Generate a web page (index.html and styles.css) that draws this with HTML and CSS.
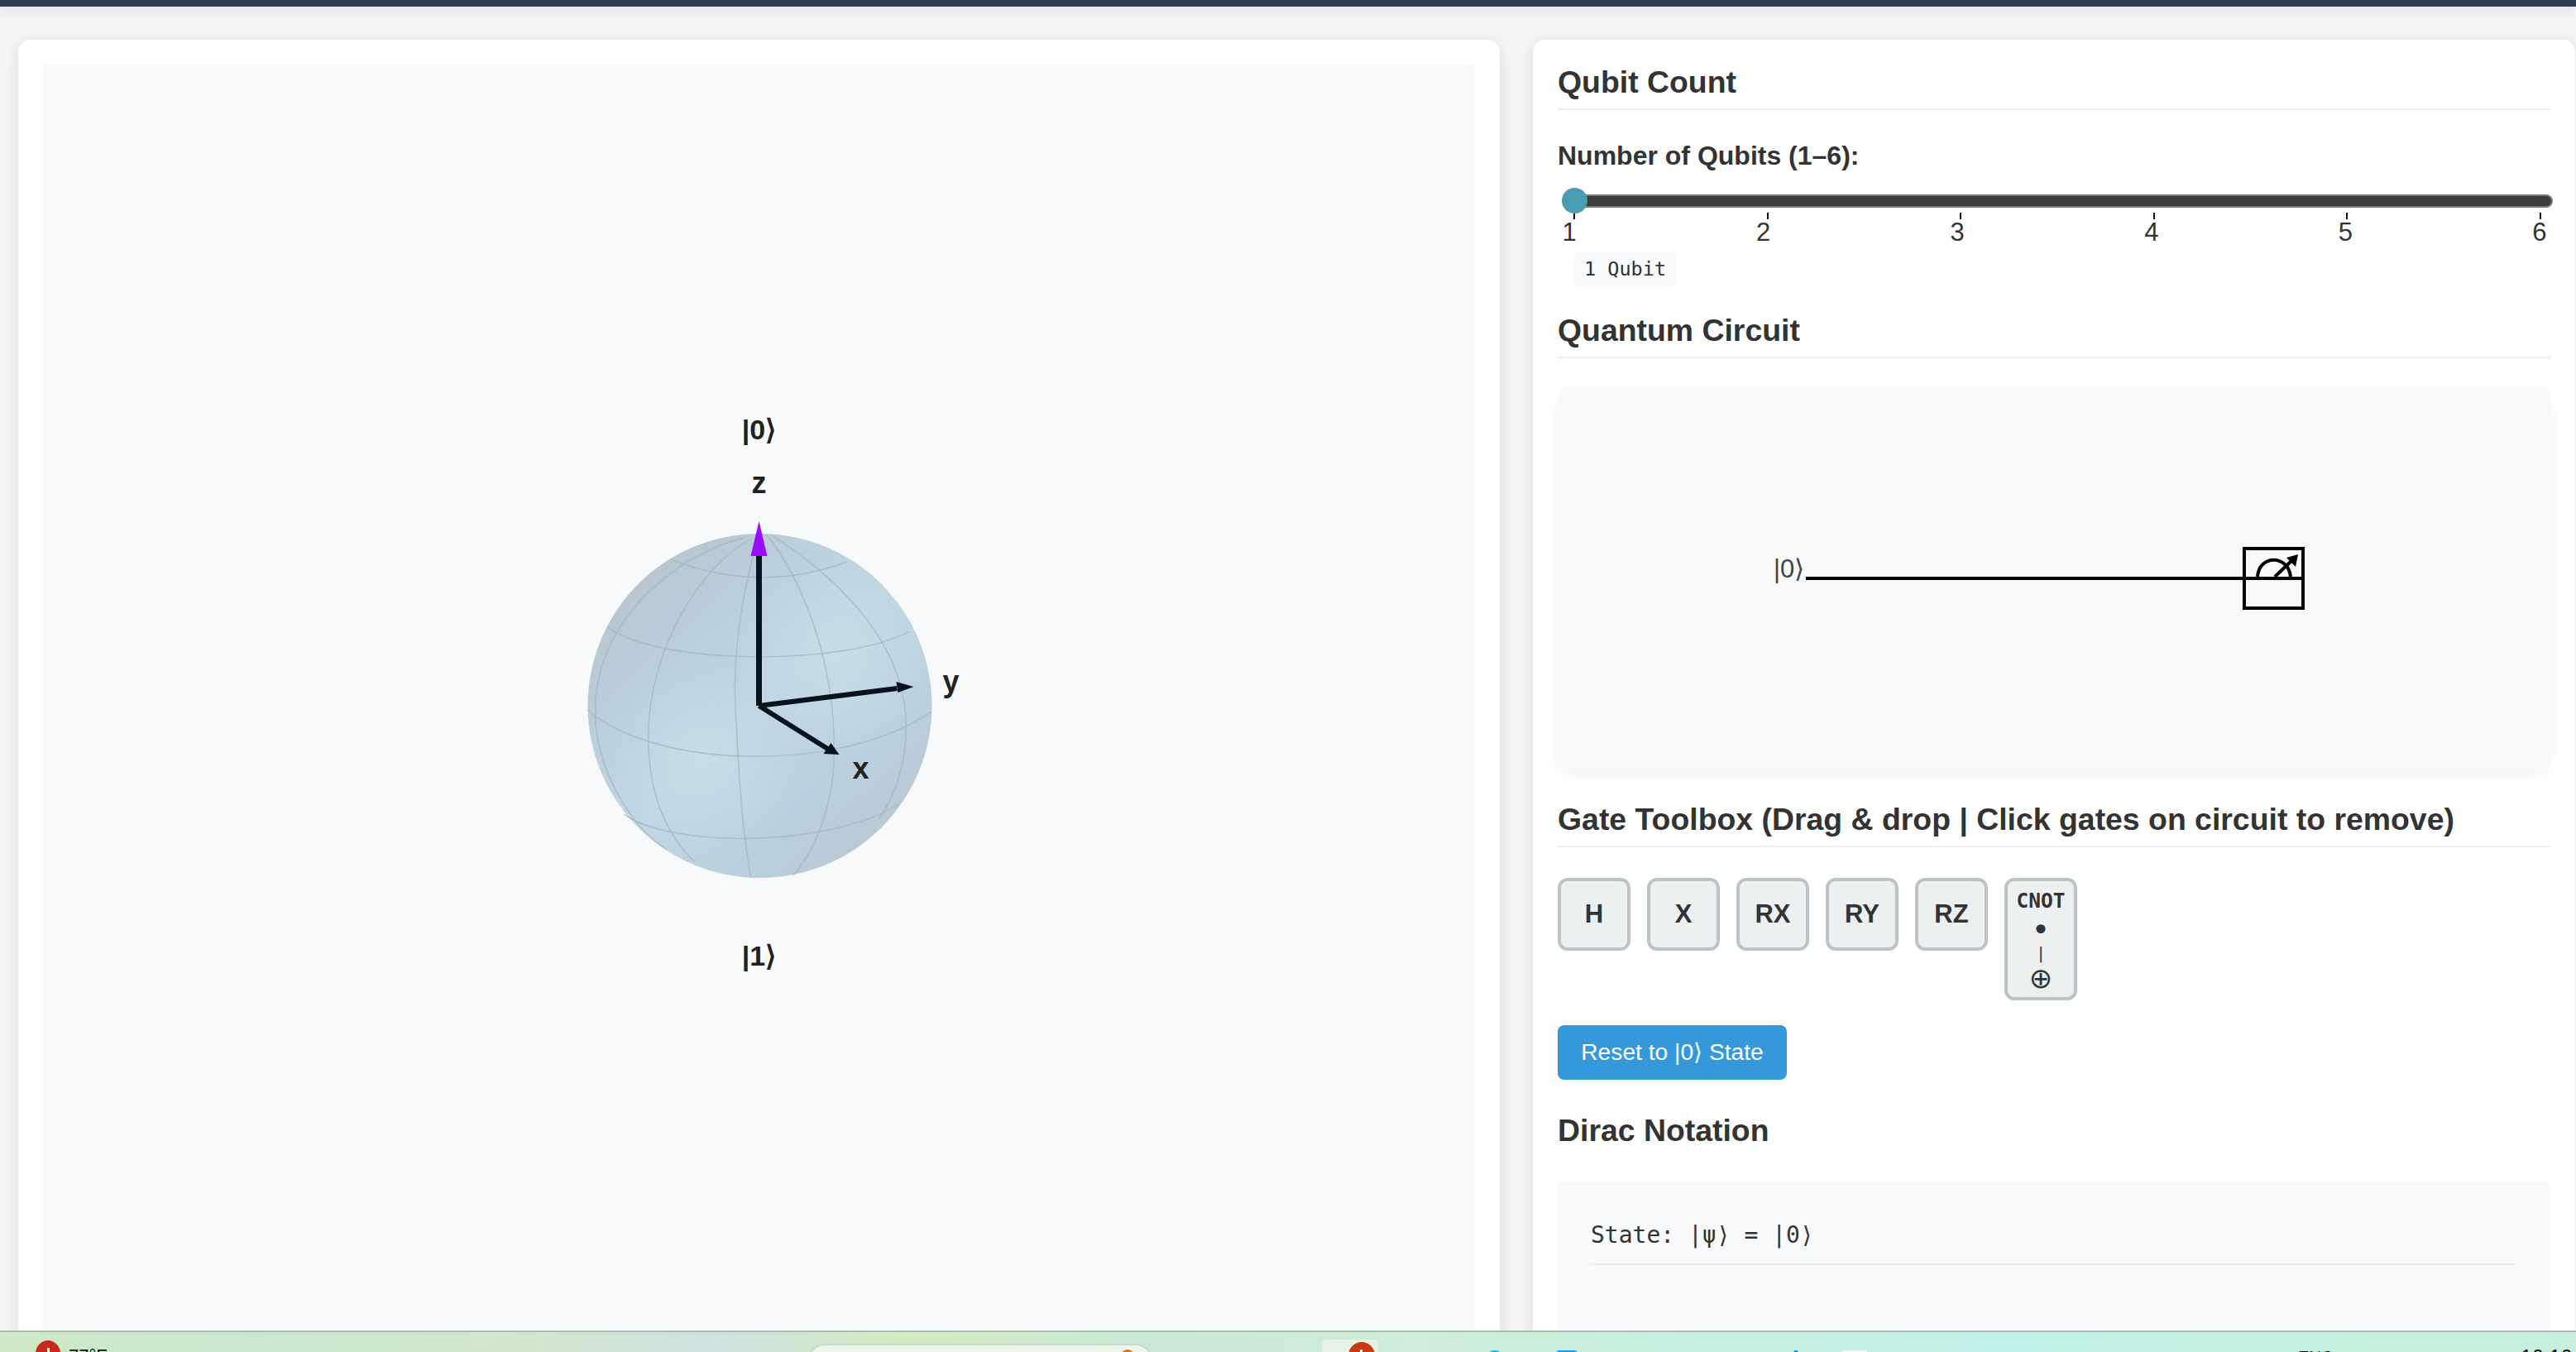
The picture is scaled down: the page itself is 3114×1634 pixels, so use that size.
FILE: index.html
```html
<!DOCTYPE html>
<html lang="en">
<head>
<meta charset="utf-8">
<title>Quantum Circuit Simulator</title>
<link rel="stylesheet" href="styles.css">
</head>
<body>
<div class="topbar"></div>
<main class="layout">
  <section class="card">
    <div class="bloch-panel">
      <svg class="bloch" width="520" height="746" viewBox="657.5 480 520 746">
        <defs>
          <linearGradient id="sphereFill" x1="0.12" y1="0.1" x2="0.88" y2="0.9">
            <stop offset="0" stop-color="#b7c4cc"/>
            <stop offset="0.26" stop-color="#bbcfdc"/>
            <stop offset="0.5" stop-color="#c0d6e2"/>
            <stop offset="0.76" stop-color="#bbd0de"/>
            <stop offset="1" stop-color="#b9c8d1"/>
          </linearGradient>
          <radialGradient id="sphereGlow" cx="0.72" cy="0.36" r="0.3">
            <stop offset="0" stop-color="#c8dde4" stop-opacity="0.9"/>
            <stop offset="1" stop-color="#c8dde4" stop-opacity="0"/>
          </radialGradient>
          <radialGradient id="sphereGlowLow" cx="0.33" cy="0.66" r="0.28">
            <stop offset="0" stop-color="#c8dde4" stop-opacity="0.9"/>
            <stop offset="1" stop-color="#c8dde4" stop-opacity="0"/>
          </radialGradient>
        </defs>
        <circle cx="918" cy="853" r="208" fill="url(#sphereFill)"/>
        <circle cx="918" cy="853" r="208" fill="url(#sphereGlow)"/>
        <circle cx="918" cy="853" r="208" fill="url(#sphereGlowLow)"/>
        <g class="grid-lines">
          <path d="M810 676Q917 718 1024 679"/>
          <path d="M734 758C800 805 1020 805 1099 763"/>
          <path d="M710 858C790 930 1020 935 1125 860"/>
          <path d="M754 984C810 1025 1000 1025 1086 972"/>
          <path d="M917 646C895 720 883 800 890 880C893 950 898 1010 907 1060"/>
          <path d="M908 651C851 680 783 780 783 893C784 960 805 1010 840 1042"/>
          <path d="M900 650C830 665 719 740 719 860C719 925 760 1000 806 1027"/>
          <path d="M926 646C965 695 1008 790 1008 907C1008 970 985 1030 958 1058"/>
          <path d="M931 646C1000 690 1095 770 1095 879C1095 925 1080 965 1061 991"/>
        </g>
        <g class="axes">
          <line x1="917" y1="853" x2="917" y2="672" class="axis-z"/>
          <polygon class="cone" points="917,630 907,672 927,672"/>
          <line x1="917" y1="853" x2="1084" y2="832" class="axis-y"/>
          <polygon class="head" points="1104,830 1083,824 1085,837"/>
          <line x1="917" y1="853" x2="1000" y2="905" class="axis-y"/>
          <polygon class="head" points="1014,912 1004,898 995,911"/>
        </g>
        <text class="ket" x="917" y="531">|0⟩</text>
        <text class="axis-label" x="917" y="596">z</text>
        <text class="axis-label" x="1149" y="836">y</text>
        <text class="axis-label" x="1040" y="941">x</text>
        <text class="ket" x="917" y="1167">|1⟩</text>
      </svg>
    </div>
  </section>

  <section class="card">
    <h2 class="heading">Qubit Count</h2>
    <label class="field-label">Number of Qubits (1–6):</label>
    <div class="slider">
      <div class="slider-track"></div>
      <div class="slider-thumb"></div>
    </div>
    <div class="ticks">
      <i></i><i></i><i></i><i></i><i></i><i></i>
    </div>
    <div class="tick-labels">
      <span>1</span><span>2</span><span>3</span><span>4</span><span>5</span><span>6</span>
    </div>
    <div class="badge">1 Qubit</div>

    <h2 class="heading heading-circuit">Quantum Circuit</h2>
    <div class="circuit">
      <svg class="circuit-svg" width="680" height="110" viewBox="2143 644 680 110">
        <text class="circuit-ket" x="2144" y="698">|0⟩</text>
        <line class="wire" x1="2183" y1="699" x2="2786" y2="699"/>
        <rect class="meter-box" x="2713" y="663" width="71" height="72"/>
        <path class="meter-arc" d="M2729 697C2731 670 2766 670 2769 697"/>
        <line class="meter-arc" x1="2750" y1="697" x2="2772" y2="676"/>
        <polygon class="meter-head" points="2778,670 2764,674 2775,685"/>
      </svg>
    </div>

    <h2 class="heading heading-gates">Gate Toolbox (Drag &amp; drop | Click gates on circuit to remove)</h2>
    <div class="gates">
      <div class="gate">H</div>
      <div class="gate">X</div>
      <div class="gate">RX</div>
      <div class="gate">RY</div>
      <div class="gate">RZ</div>
      <div class="gate gate-cnot">
        <span class="cnot-name">CNOT</span>
        <span class="cnot-dot">•</span>
        <span class="cnot-line">|</span>
        <span class="cnot-target">⊕</span>
      </div>
    </div>
    <button class="reset">Reset to |0⟩ State</button>

    <h2 class="heading heading-plain">Dirac Notation</h2>
    <div class="dirac">
      <div class="dirac-state">State: |ψ⟩ = |0⟩</div>
    </div>
  </section>
</main>

<footer class="taskbar">
  <div class="tb-weather"><span class="tb-red"></span><span class="tb-temp">77°F</span></div>
  <div class="tb-search"><span class="tb-orange"></span></div>
  <div class="tb-app"><span class="tb-red tb-red-small"></span></div>
  <span class="tb-icon tb-cyan"></span>
  <span class="tb-icon tb-blue"></span>
  <span class="tb-icon tb-blue2"></span>
  <span class="tb-icon tb-white"></span>
  <span class="tb-lang">ENG</span>
  <span class="tb-clock">10:10</span>
</footer>
</body>
</html>
```
FILE: styles.css
```css
* { box-sizing: border-box; }
html, body { margin: 0; height: 100%; }
body {
  background: #f5f5f5;
  font-family: "Liberation Sans", Arial, sans-serif;
  color: #333;
  overflow: hidden;
  position: relative;
}
.topbar {
  height: 8px;
  background: #2c3e50;
  box-shadow: 0 4px 12px rgba(0, 0, 0, 0.1);
}
.layout {
  display: grid;
  grid-template-columns: 1791px 1260px;
  column-gap: 40px;
  padding: 40px 0 0 22px;
}
.card {
  background: #fff;
  border-radius: 15px;
  padding: 30px;
  height: 1700px;
  box-shadow: 0 4px 20px rgba(0, 0, 0, 0.1);
}
.bloch-panel {
  background: #f8f9fa;
  height: 1550px;
  display: flex;
  align-items: center;
  justify-content: center;
}
.bloch { display: block; }
.grid-lines path { fill: none; stroke: #a9b9c2; stroke-width: 1.4; opacity: 0.9; }
.axes line { stroke: #06121c; stroke-linecap: butt; }
.axis-z { stroke-width: 7; }
.axis-y { stroke-width: 6; }
.cone { fill: #9a0cff; }
.head { fill: #06121c; }
.ket, .axis-label {
  font-family: "Liberation Sans", Arial, sans-serif;
  font-weight: 700;
  text-anchor: middle;
  fill: #222;
}
.ket { font-size: 34px; }
.axis-label { font-size: 36px; }

.heading {
  margin: 0;
  font-size: 37.4px;
  line-height: 43px;
  font-weight: 700;
  color: #333;
  padding-bottom: 10px;
  border-bottom: 2px solid #eee;
}
.field-label {
  display: block;
  margin-top: 36px;
  font-size: 32px;
  line-height: 38px;
  font-weight: 700;
}
.slider {
  position: relative;
  height: 32px;
  margin-top: 20px;
}
.slider-track {
  position: absolute;
  left: 6px;
  right: -3px;
  top: 8px;
  height: 16px;
  background: #3c3c3c;
  border: 2px solid #777;
  border-radius: 8px;
}
.slider-thumb {
  position: absolute;
  left: 5px;
  top: 0;
  width: 31px;
  height: 31px;
  border-radius: 50%;
  background: #4a9cb0;
}
.ticks {
  display: flex;
  justify-content: space-between;
  margin: -2px 11px 0 19px;
}
.ticks i {
  display: block;
  width: 2px;
  height: 8px;
  background: #111;
}
.tick-labels {
  display: flex;
  justify-content: space-between;
  margin: 0 4px 0 5px;
}
.tick-labels span {
  width: 18px;
  text-align: center;
  font-size: 31px;
  line-height: 32px;
  color: #333;
}
.badge {
  display: block;
  width: 124px;
  margin: 7px 0 0 20px;
  padding: 0 12px;
  height: 43px;
  line-height: 43px;
  font-family: "DejaVu Sans Mono", monospace;
  font-size: 23.5px;
  white-space: nowrap;
  background: #f8f9fa;
  border-radius: 6px;
}
.heading-circuit { margin-top: 31px; }
.circuit {
  height: 461px;
  margin-top: 35px;
  background: #f8f9fa;
  border-radius: 12px;
  box-shadow: 0 8px 24px rgba(0, 0, 0, 0.05);
  display: flex;
  align-items: center;
  justify-content: center;
}
.circuit-svg { display: block; flex: none; }
.circuit-ket { font-family: "Liberation Sans", Arial, sans-serif; font-size: 31px; fill: #444; }
.wire { stroke: #000; stroke-width: 4; }
.meter-box { fill: none; stroke: #000; stroke-width: 4; }
.meter-arc { fill: none; stroke: #000; stroke-width: 4; }
.meter-head { fill: #000; }

.heading-gates { margin-top: 40px; }
.gates {
  display: flex;
  align-items: flex-start;
  gap: 20px;
  margin-top: 37px;
}
.gate {
  width: 88px;
  height: 88px;
  background: #ecf0f1;
  border: 4px solid #bdc3c7;
  border-radius: 12px;
  display: flex;
  align-items: center;
  justify-content: center;
  font-size: 31px;
  font-weight: 700;
  color: #333;
}
.gate-cnot {
  height: 148px;
  flex-direction: column;
  justify-content: flex-start;
  padding-top: 10px;
  font-family: "DejaVu Sans", sans-serif;
}
.gate-cnot span { display: block; text-align: center; }
.cnot-name { font-family: "DejaVu Sans Mono", monospace; font-size: 24.5px; line-height: 28px; font-weight: 700; }
.cnot-dot { font-size: 38px; line-height: 42px; font-weight: 400; }
.cnot-line { font-size: 20px; line-height: 14px; font-weight: 400; }
.cnot-target { font-size: 34px; line-height: 46px; font-weight: 400; }
.reset {
  display: block;
  margin-top: 30px;
  width: 277px;
  height: 66px;
  padding: 0 0 2px;
  border: 0;
  border-radius: 8px;
  background: #3498db;
  color: #fff;
  font-family: "Liberation Sans", Arial, sans-serif;
  font-size: 28.2px;
}
.heading-plain { border-bottom: 0; margin-top: 40px; padding-bottom: 0; }
.dirac {
  margin-top: 40px;
  height: 400px;
  background: #f8f9fa;
  border-radius: 8px;
  padding: 40px;
}
.dirac-state {
  font-family: "DejaVu Sans Mono", monospace;
  font-size: 28px;
  height: 61px;
  line-height: 50px;
  border-bottom: 2px solid #ecf0f1;
}

.taskbar {
  position: absolute;
  left: 0;
  right: 0;
  top: 1608px;
  height: 26px;
  overflow: hidden;
  border-top: 2px solid #aebbb2;
  background: linear-gradient(90deg, #cfe8c8 0%, #c8e8ce 10%, #d3e6cb 20%, #cde1e0 27.5%, #d3ebc2 35%, #c8ead6 45%, #cdeed8 55%, #c0efe8 77.7%, #c4efdc 93%, #c9eedd 100%);
}
.taskbar > * { position: absolute; }
.tb-weather { left: 43px; top: 0; }
.tb-red {
  position: absolute;
  left: 0;
  top: 10px;
  width: 30px;
  height: 32px;
  border-radius: 50%;
  background: #c42b1c;
}
.tb-red::after {
  content: "";
  position: absolute;
  left: 14px;
  top: 9px;
  width: 3px;
  height: 10px;
  background: #fff;
}
.tb-temp {
  position: absolute;
  left: 40px;
  top: 17px;
  font-family: "Liberation Sans", Arial, sans-serif;
  font-size: 22px;
  line-height: 24px;
  color: #111;
}
.tb-search {
  left: 977px;
  top: 14px;
  width: 416px;
  height: 40px;
  border-radius: 20px;
  background: #eef6ec;
  border: 2px solid #c6dcc0;
}
.tb-orange {
  position: absolute;
  left: 376px;
  top: 5px;
  width: 16px;
  height: 16px;
  border-radius: 50%;
  background: #d9751f;
}
.tb-app {
  left: 1596px;
  top: 7px;
  width: 72px;
  height: 40px;
  border-radius: 8px;
  background: #e4f3e4;
  border: 2px solid #d5e9d2;
}
.tb-red.tb-red-small { left: 32px; top: 3px; width: 32px; height: 32px; background: #c93a12; }
.tb-icon { width: 26px; height: 26px; top: 22px; }
.tb-cyan { left: 1794px; background: #19b5c9; border-radius: 50%; }
.tb-blue { left: 1881px; background: #1b9bf0; border-radius: 4px; }
.tb-blue2 { left: 2165px; width: 12px; top: 22px; background: #1580c8; border-radius: 50%; }
.tb-white { left: 2226px; width: 32px; background: #f2f6f2; border-radius: 4px; }
.tb-lang, .tb-clock {
  font-family: "Liberation Sans", Arial, sans-serif;
  line-height: 24px;
  color: #111;
}
.tb-lang { left: 2778px; top: 18px; font-size: 20px; }
.tb-clock { left: 3047px; top: 18px; font-size: 25px; }
```
